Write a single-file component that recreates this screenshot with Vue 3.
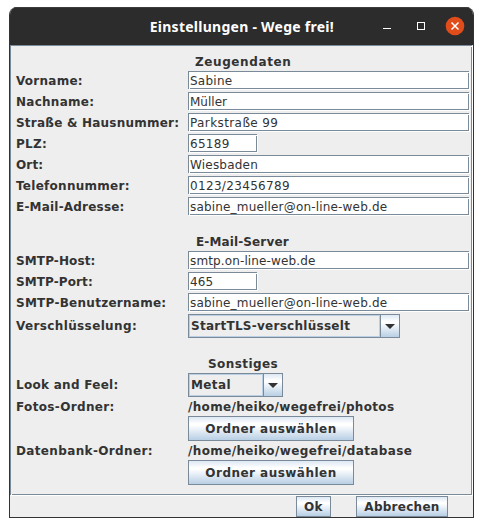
<script setup>
// ls / vls: tracking of the label and of the value, in px
const groups = [
  {
    title: 'Zeugendaten', cls: 'g1', ls: 0.6,
    rows: [
      { label: 'Vorname:', ls: 0.24, type: 'text', value: 'Sabine', vls: 0.25 },
      { label: 'Nachname:', ls: 0.26, type: 'text', value: 'Müller', vls: 0 },
      { label: 'Straße & Hausnummer:', ls: 0.22, type: 'text', value: 'Parkstraße 99', vls: 0.4 },
      { label: 'PLZ:', ls: 0.3, type: 'text', value: '65189', vls: 0.3 },
      { label: 'Ort:', ls: 0.15, type: 'text', value: 'Wiesbaden', vls: 0.2 },
      { label: 'Telefonnummer:', ls: 0.27, type: 'text', value: '0123/23456789', vls: 0.33 },
      { label: 'E-Mail-Adresse:', ls: 0.2, type: 'text', value: 'sabine_mueller@on-line-web.de', vls: 0.18 },
    ],
  },
  {
    title: 'E-Mail-Server', cls: 'g2', ls: 0.13,
    rows: [
      { label: 'SMTP-Host:', ls: 0.12, type: 'text', value: 'smtp.on-line-web.de', vls: 0.13 },
      { label: 'SMTP-Port:', ls: 0.1, type: 'text', value: '465', vls: 0.1 },
      { label: 'SMTP-Benutzername:', ls: 0.27, type: 'text', value: 'sabine_mueller@on-line-web.de', vls: 0.18 },
      { label: 'Verschlüsselung:', ls: 0.37, type: 'combo', value: 'StartTLS-verschlüsselt', vls: 0.27, wide: true },
    ],
  },
  {
    title: 'Sonstiges', cls: 'g3', ls: 0.42,
    rows: [
      { label: 'Look and Feel:', ls: 0.28, type: 'combo', value: 'Metal', vls: 0.37 },
      { label: 'Fotos-Ordner:', ls: 0.35, type: 'path', value: '/home/heiko/wegefrei/photos', vls: 0.33 },
      { label: 'Datenbank-Ordner:', ls: 0.36, type: 'path', value: '/home/heiko/wegefrei/database', vls: 0.37 },
    ],
  },
]
const shortFields = ['PLZ:', 'SMTP-Port:']
const track = (v) => ({ letterSpacing: v + 'px' })
</script>

<template>
  <div class="window">
    <header class="titlebar">
      <h1>Einstellungen - Wege frei!</h1>
      <svg class="controls" width="90" height="21" viewBox="0 0 90 21">
        <path d="M4 12.5h8" stroke="#fff" />
        <rect x="38.5" y="6.5" width="7" height="7" fill="none" stroke="#fff" />
        <circle cx="76" cy="10" r="9.3" fill="#e04c1a" />
        <path d="M72.5 6.5l7 7M79.5 6.5l-7 7" stroke="#fff" stroke-width="1.5" />
      </svg>
    </header>
    <main class="panel">
      <section v-for="g in groups" :key="g.title" :class="g.cls">
        <h2 :style="track(g.ls)">{{ g.title }}</h2>
        <div v-for="r in g.rows" :key="r.label" class="row" :class="r.type">
          <label :style="track(r.ls)">{{ r.label }}</label>
          <div v-if="r.type === 'text'" class="field" :class="{ short: shortFields.includes(r.label) }" :style="track(r.vls)">{{ r.value }}</div>
          <div v-else-if="r.type === 'combo'" class="select" :class="{ wide: r.wide }">
            <div class="value" :style="track(r.vls)">{{ r.value }}</div>
            <div class="arrow"><svg width="10" height="5" viewBox="0 0 10 5"><path d="M0 0h10L5 5z" fill="#333" /></svg></div>
          </div>
          <div v-else class="folder">
            <div class="location" :style="track(r.vls)">{{ r.value }}</div>
            <button class="choose">Ordner auswählen</button>
          </div>
        </div>
      </section>
    </main>
    <footer>
      <button class="ok">Ok</button>
      <button class="cancel">Abbrechen</button>
    </footer>
  </div>
</template>

<style>
body { margin: 0; background: #fff; }
</style>

<style scoped>
* { box-sizing: border-box; }
.window {
  width: 465px; height: 511px; margin: 7px 0 0 9px;
  border: 1px solid #333; border-top: 0; border-radius: 8px 8px 0 0;
  background: #eee; color: #333; overflow: hidden;
  font: bold 12px/18px "DejaVu Sans", sans-serif;
  display: flex; flex-direction: column; white-space: nowrap;
}
.titlebar {
  height: 38px; flex: none; background: #2c2c2c; border-top: 1px solid #3c3c3c;
  display: flex; align-items: center; justify-content: flex-end;
}
h1 {
  margin: 0 45px 0 0; color: #fff; font: bold 14px/20px "Noto Sans", sans-serif;
  letter-spacing: 0.26px;
}
.controls { margin-right: 4px; flex: none; }
.panel {
  position: relative; height: 450px; width: 462px; flex: none;
  border: 1px solid #7a8a99; box-shadow: 1px 1px #fff; padding: 7px 0 0 5px;
}
.panel::before, .panel::after, .field::before, .field::after {
  content: ""; position: absolute; width: 1px; height: 1px; background: #fff;
}
.panel::before, .field::before { right: -1px; top: 0; }
.panel::after, .field::after { left: 0; bottom: -1px; }
h2 { margin: 0; font-size: 12px; line-height: 18px; height: 18px; }
.g1 h2 { padding-left: 179px; }
.g2 h2 { padding-left: 180px; }
.g3 h2 { padding-left: 192px; }
.g2 { padding-top: 15px; }
.g3 { padding-top: 17px; }
.row { display: grid; grid-template-columns: 172px 1fr; line-height: 20px; }
.row.text { height: 21px; }
.row.combo { height: 24px; line-height: 24px; }
.row.path { height: 44px; }
.field {
  position: relative; width: 281px; height: 18px; border: 1px solid #7a8a99; line-height: 18px;
  background: #fff; box-shadow: 1px 1px #fff; font-weight: normal; padding-left: 1px;
}
.field.short { width: 69px; }
.select { display: flex; width: 95px; height: 24px; border: 1px solid #7a8a99; line-height: 20px; }
.select.wide { width: 212px; }
.value { flex: 1; border: 1px solid #b8cfe5; padding-left: 1px; }
.arrow { width: 19px; border-left: 1px solid #7a8a99; display: grid; place-items: center; }
.arrow, button { background: linear-gradient(#dde8f3, #fff 30%, #fff 35%, #b8cfe5); }
button {
  font: inherit; color: #333; border: 1px solid #7a8a99; padding: 0; border-radius: 0;
  display: flex; justify-content: center; align-items: flex-start;
}
.choose { width: 166px; height: 25px; line-height: 24px; letter-spacing: 0.47px; }
.location { height: 19px; }
footer { height: 22px; display: flex; padding: 1px 0 0 286px; gap: 25px; }
footer button { height: 21px; line-height: 20px; }
.ok { width: 35px; letter-spacing: 0.5px; }
.cancel { width: 92px; letter-spacing: 0.27px; }
</style>
